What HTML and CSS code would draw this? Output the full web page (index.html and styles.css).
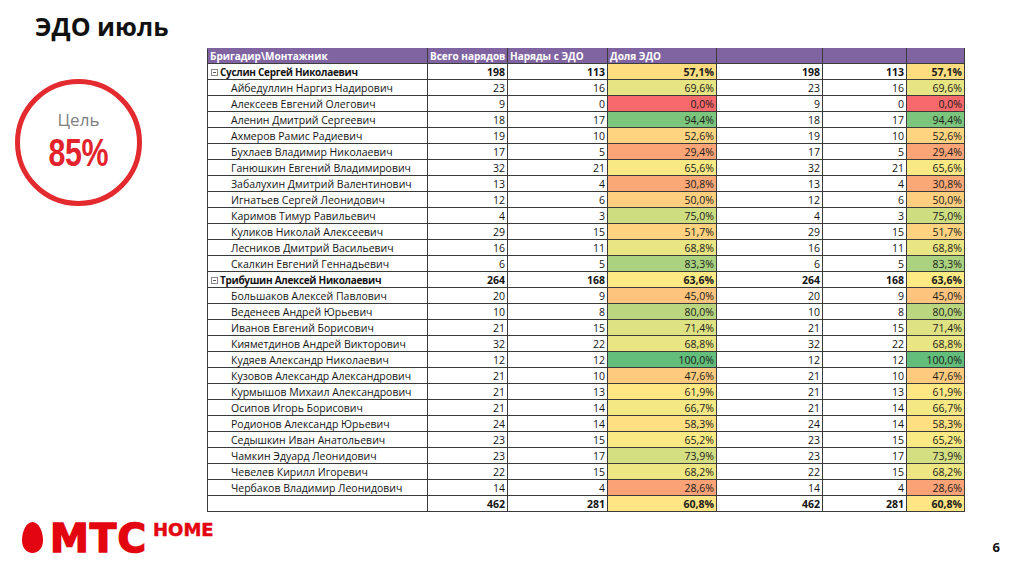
FILE: index.html
```html
<!DOCTYPE html>
<html lang="ru">
<head>
<meta charset="utf-8">
<title>ЭДО июль</title>
<link rel="stylesheet" href="styles.css">
</head>
<body>
<div class="slide">
  <aside class="left">
    <h1 class="title">ЭДО июль</h1>
    <div class="goal">
      <span class="goal-label">Цель</span>
      <span class="goal-value">85%</span>
    </div>
    <div class="logo">
      <svg class="egg" width="21" height="31" viewBox="0 0 21 31"><path d="M10.5 0 C4 0 0 9.5 0 18.5 C0 25.8 4.6 31 10.5 31 C16.4 31 21 25.8 21 18.5 C21 9.5 17 0 10.5 0 Z" fill="#e30611"/></svg>
      <span class="mts">МТС</span>
      <span class="home">HOME</span>
    </div>
  </aside>
  <main class="right">
    <table class="grid">
      <colgroup>
        <col class="c-name"><col class="c-n1"><col class="c-n2"><col class="c-p1"><col class="c-n3"><col class="c-n4"><col class="c-p2">
      </colgroup>
      <thead>
        <tr><th>Бригадир\Монтажник</th><th>Всего нарядов</th><th>Наряды с ЭДО</th><th>Доля ЭДО</th><th></th><th></th><th></th></tr>
      </thead>
      <tbody>
        <tr class="group"><td class="name"><span class="toggle"></span>Суслин Сергей Николаевич</td><td>198</td><td>113</td><td class="pct" style="background:#fedd81">57,1%</td><td>198</td><td>113</td><td class="pct" style="background:#fedd81">57,1%</td></tr>
        <tr><td class="name sub">Айбедуллин Наргиз Надирович</td><td>23</td><td>16</td><td class="pct" style="background:#e7e483">69,6%</td><td>23</td><td>16</td><td class="pct" style="background:#e7e483">69,6%</td></tr>
        <tr><td class="name sub">Алексеев Евгений Олегович</td><td>9</td><td>0</td><td class="pct" style="background:#f8696b">0,0%</td><td>9</td><td>0</td><td class="pct" style="background:#f8696b">0,0%</td></tr>
        <tr><td class="name sub">Аленин Дмитрий Сергеевич</td><td>18</td><td>17</td><td class="pct" style="background:#7bc57c">94,4%</td><td>18</td><td>17</td><td class="pct" style="background:#7bc57c">94,4%</td></tr>
        <tr><td class="name sub">Ахмеров Рамис Радиевич</td><td>19</td><td>10</td><td class="pct" style="background:#fed480">52,6%</td><td>19</td><td>10</td><td class="pct" style="background:#fed480">52,6%</td></tr>
        <tr><td class="name sub">Бухлаев Владимир Николаевич</td><td>17</td><td>5</td><td class="pct" style="background:#fba576">29,4%</td><td>17</td><td>5</td><td class="pct" style="background:#fba576">29,4%</td></tr>
        <tr><td class="name sub">Ганюшкин Евгений Владимирович</td><td>32</td><td>21</td><td class="pct" style="background:#f8e984">65,6%</td><td>32</td><td>21</td><td class="pct" style="background:#f8e984">65,6%</td></tr>
        <tr><td class="name sub">Забалухин Дмитрий Валентинович</td><td>13</td><td>4</td><td class="pct" style="background:#fba877">30,8%</td><td>13</td><td>4</td><td class="pct" style="background:#fba877">30,8%</td></tr>
        <tr><td class="name sub">Игнатьев Сергей Леонидович</td><td>12</td><td>6</td><td class="pct" style="background:#fdcf7f">50,0%</td><td>12</td><td>6</td><td class="pct" style="background:#fdcf7f">50,0%</td></tr>
        <tr><td class="name sub">Каримов Тимур Равильевич</td><td>4</td><td>3</td><td class="pct" style="background:#cfdd81">75,0%</td><td>4</td><td>3</td><td class="pct" style="background:#cfdd81">75,0%</td></tr>
        <tr><td class="name sub">Куликов Николай Алексеевич</td><td>29</td><td>15</td><td class="pct" style="background:#fed27f">51,7%</td><td>29</td><td>15</td><td class="pct" style="background:#fed27f">51,7%</td></tr>
        <tr><td class="name sub">Лесников Дмитрий Васильевич</td><td>16</td><td>11</td><td class="pct" style="background:#eae583">68,8%</td><td>16</td><td>11</td><td class="pct" style="background:#eae583">68,8%</td></tr>
        <tr><td class="name sub">Скалкин Евгений Геннадьевич</td><td>6</td><td>5</td><td class="pct" style="background:#abd37f">83,3%</td><td>6</td><td>5</td><td class="pct" style="background:#abd37f">83,3%</td></tr>
        <tr class="group"><td class="name"><span class="toggle"></span>Трибушин Алексей Николаевич</td><td>264</td><td>168</td><td class="pct" style="background:#ffea84">63,6%</td><td>264</td><td>168</td><td class="pct" style="background:#ffea84">63,6%</td></tr>
        <tr><td class="name sub">Большаков Алексей Павлович</td><td>20</td><td>9</td><td class="pct" style="background:#fdc47d">45,0%</td><td>20</td><td>9</td><td class="pct" style="background:#fdc47d">45,0%</td></tr>
        <tr><td class="name sub">Веденеев Андрей Юрьевич</td><td>10</td><td>8</td><td class="pct" style="background:#bad780">80,0%</td><td>10</td><td>8</td><td class="pct" style="background:#bad780">80,0%</td></tr>
        <tr><td class="name sub">Иванов Евгений Борисович</td><td>21</td><td>15</td><td class="pct" style="background:#dfe282">71,4%</td><td>21</td><td>15</td><td class="pct" style="background:#dfe282">71,4%</td></tr>
        <tr><td class="name sub">Кияметдинов Андрей Викторович</td><td>32</td><td>22</td><td class="pct" style="background:#eae583">68,8%</td><td>32</td><td>22</td><td class="pct" style="background:#eae583">68,8%</td></tr>
        <tr><td class="name sub">Кудяев Александр Николаевич</td><td>12</td><td>12</td><td class="pct" style="background:#63be7b">100,0%</td><td>12</td><td>12</td><td class="pct" style="background:#63be7b">100,0%</td></tr>
        <tr><td class="name sub">Кузовов Александр Александрович</td><td>21</td><td>10</td><td class="pct" style="background:#fdca7e">47,6%</td><td>21</td><td>10</td><td class="pct" style="background:#fdca7e">47,6%</td></tr>
        <tr><td class="name sub">Курмышов Михаил Александрович</td><td>21</td><td>13</td><td class="pct" style="background:#ffe783">61,9%</td><td>21</td><td>13</td><td class="pct" style="background:#ffe783">61,9%</td></tr>
        <tr><td class="name sub">Осипов Игорь Борисович</td><td>21</td><td>14</td><td class="pct" style="background:#f3e883">66,7%</td><td>21</td><td>14</td><td class="pct" style="background:#f3e883">66,7%</td></tr>
        <tr><td class="name sub">Родионов Александр Юрьевич</td><td>24</td><td>14</td><td class="pct" style="background:#fedf82">58,3%</td><td>24</td><td>14</td><td class="pct" style="background:#fedf82">58,3%</td></tr>
        <tr><td class="name sub">Седышкин Иван Анатольевич</td><td>23</td><td>15</td><td class="pct" style="background:#faea84">65,2%</td><td>23</td><td>15</td><td class="pct" style="background:#faea84">65,2%</td></tr>
        <tr><td class="name sub">Чамкин Эдуард Леонидович</td><td>23</td><td>17</td><td class="pct" style="background:#d4df82">73,9%</td><td>23</td><td>17</td><td class="pct" style="background:#d4df82">73,9%</td></tr>
        <tr><td class="name sub">Чевелев Кирилл Игоревич</td><td>22</td><td>15</td><td class="pct" style="background:#ede683">68,2%</td><td>22</td><td>15</td><td class="pct" style="background:#ede683">68,2%</td></tr>
        <tr><td class="name sub">Чербаков Владимир Леонидович</td><td>14</td><td>4</td><td class="pct" style="background:#fba376">28,6%</td><td>14</td><td>4</td><td class="pct" style="background:#fba376">28,6%</td></tr>
        <tr class="total"><td class="name"></td><td>462</td><td>281</td><td class="pct" style="background:#ffe583">60,8%</td><td>462</td><td>281</td><td class="pct" style="background:#ffe583">60,8%</td></tr>
      </tbody>
    </table>
    <div class="page-num">6</div>
  </main>
</div>
</body>
</html>
```

FILE: styles.css
```css
* { box-sizing: border-box; }
html, body { margin: 0; padding: 0; background: #ffffff; }
body { font-family: "Open Sans", "Liberation Sans", sans-serif; color: #111; }

.slide {
  width: 1024px;
  height: 574px;
  display: flex;
  overflow: hidden;
}

.left {
  width: 207px;
  flex: none;
  display: flex;
  flex-direction: column;
  padding-bottom: 16px;
}

.title {
  margin: 11px 0 0 35px;
  font-size: 25px;
  line-height: 30px;
  font-weight: 700;
  color: #111;
}

.goal {
  margin: 38px 0 0 15px;
  width: 127px;
  height: 127px;
  border: 5px solid #e32a2f;
  border-radius: 50%;
  display: flex;
  flex-direction: column;
  align-items: center;
  padding-top: 26px;
}
.goal-label {
  font-size: 17px;
  line-height: 20px;
  color: #7f7f7f;
}
.goal-value {
  margin-top: 3px;
  font-family: "Liberation Sans", Arial, sans-serif;
  font-weight: 700;
  font-size: 38px;
  line-height: 40px;
  color: #e3232b;
  display: inline-block;
  transform: scaleX(0.8);
  letter-spacing: -0.5px;
}

.logo {
  margin-top: auto;
  display: flex;
  align-items: flex-start;
  padding-left: 22px;
}
.egg { margin-top: 3px; flex: none; }
.mts {
  margin-left: 7px;
  font-family: "DejaVu Sans", sans-serif;
  font-size: 39px;
  line-height: 39px;
  font-weight: 700;
  color: #e30611;
  -webkit-text-stroke: 1.5px #e30611;
  letter-spacing: 1px;
}
.home {
  margin-left: 6px;
  margin-top: 2px;
  font-family: "DejaVu Sans", sans-serif;
  font-size: 18px;
  line-height: 18px;
  font-weight: 700;
  color: #e30611;
  -webkit-text-stroke: 0.5px #e30611;
}

.right {
  flex: 1;
  display: flex;
  flex-direction: column;
  padding-top: 48px;
  padding-bottom: 19px;
  padding-right: 24px;
}

.grid {
  border-collapse: collapse;
  table-layout: fixed;
  width: 757px;
  font-size: 10.5px;
  color: #141414;
}
.c-name { width: 220px; }
.c-n1 { width: 80px; }
.c-n2 { width: 100px; }
.c-p1 { width: 109px; }
.c-n3 { width: 106px; }
.c-n4 { width: 84px; }
.c-p2 { width: 58px; }

.grid th {
  background: #8064a2;
  color: #ffffff;
  font-weight: 700;
  text-align: left;
  height: 15px;
  padding: 0 2px;
  line-height: 13px;
  font-size: 10px;
  white-space: nowrap;
  overflow: hidden;
  border: 1px solid #3c3c3c;
  border-top-color: #8064a2;
}

.grid td {
  height: 16px;
  padding: 0 2px 0 2px;
  line-height: 14px;
  text-align: right;
  white-space: nowrap;
  overflow: hidden;
  border: 1px solid #3a3a3a;
}
.grid td.name { text-align: left; padding-left: 3px; }
.grid td.sub { padding-left: 23px; }
.grid tr.group td, .grid tr.total td { font-weight: 700; }
.grid tr.group td.name { font-size: 10px; letter-spacing: -0.3px; }
.grid td.pct { color: #1a1a1a; }

.toggle {
  display: inline-block;
  width: 7px;
  height: 7px;
  border: 1px solid #8a8a8a;
  margin-right: 2px;
  position: relative;
  vertical-align: 0px;
}
.toggle::after {
  content: "";
  position: absolute;
  left: 1px;
  right: 1px;
  top: 2px;
  height: 1px;
  background: #555;
}

.page-num {
  margin-top: auto;
  text-align: right;
  font-size: 13px;
  line-height: 15px;
  font-weight: 700;
  color: #111;
}
```
